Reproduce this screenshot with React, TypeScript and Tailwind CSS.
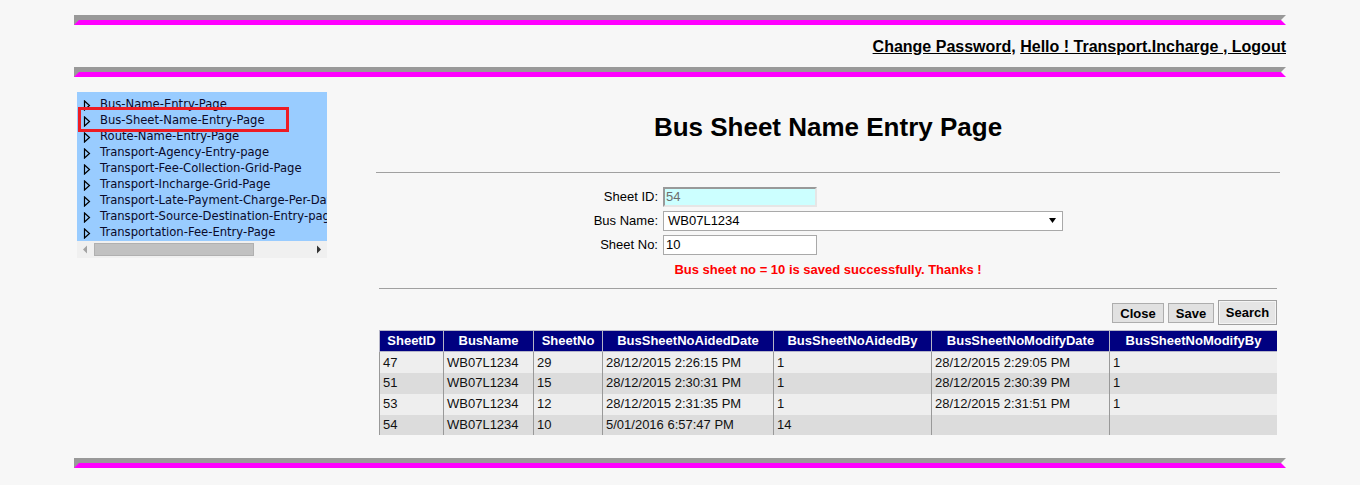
import React from "react";

const menuItems = [
  "Bus-Name-Entry-Page",
  "Bus-Sheet-Name-Entry-Page",
  "Route-Name-Entry-Page",
  "Transport-Agency-Entry-page",
  "Transport-Fee-Collection-Grid-Page",
  "Transport-Incharge-Grid-Page",
  "Transport-Late-Payment-Charge-Per-Day-Entry-Page",
  "Transport-Source-Destination-Entry-page",
  "Transportation-Fee-Entry-Page",
];

const rows = [
  ["47", "WB07L1234", "29", "28/12/2015 2:26:15 PM", "1", "28/12/2015 2:29:05 PM", "1"],
  ["51", "WB07L1234", "15", "28/12/2015 2:30:31 PM", "1", "28/12/2015 2:30:39 PM", "1"],
  ["53", "WB07L1234", "12", "28/12/2015 2:31:35 PM", "1", "28/12/2015 2:31:51 PM", "1"],
  ["54", "WB07L1234", "10", "5/01/2016 6:57:47 PM", "14", "", ""],
];

const columns = [
  { name: "SheetID", w: "w-[64px]" },
  { name: "BusName", w: "w-[90px]" },
  { name: "SheetNo", w: "w-[69px]" },
  { name: "BusSheetNoAidedDate", w: "w-[171px]" },
  { name: "BusSheetNoAidedBy", w: "w-[158px]" },
  { name: "BusSheetNoModifyDate", w: "w-[178px]" },
  { name: "BusSheetNoModifyBy", w: "w-[168px]" },
];

// gray / magenta divider bar
const Bar = () => (
  <div className="h-0 w-full border-t-[5px] border-b-[5px] border-l-[5px] border-r-[5px] border-t-[#999999] border-b-[#ff00ff] border-l-[#999999] border-r-[#f7f7f7]" />
);

const TreeArrow = () => (
  <svg width="8" height="11" viewBox="0 0 8 11" className="block">
    <path d="M1.5 1 L6.5 5.5 L1.5 10 Z" fill="none" stroke="#000" strokeWidth="1.2" />
  </svg>
);

const Sidebar = () => (
  <div className="relative ml-[3px] mt-[15px] w-[250px] self-start">
    {/* tree menu */}
    <div className="overflow-hidden bg-[#99ccff] pt-[5px] font-['DejaVu_Sans',sans-serif] text-[11.6px] text-[#0a0a2a]">
      {menuItems.map((item) => (
        <div key={item} className="flex h-[16px] items-center whitespace-nowrap">
          <span className="flex w-[23px] shrink-0 justify-end pr-[9px]">
            <TreeArrow />
          </span>
          <span>{item}</span>
        </div>
      ))}
    </div>
    {/* horizontal scrollbar */}
    <div className="flex h-[17px] items-center bg-[#f0f0f0]">
      <svg width="17" height="17" viewBox="0 0 17 17" className="block shrink-0">
        <path d="M6 8.5 L10 4.5 L10 12.5 Z" fill="#a3a3a3" />
      </svg>
      <div className="h-[13px] w-[160px] border border-[#b0b0b0] bg-[#c1c1c1]" />
      <svg width="17" height="17" viewBox="0 0 17 17" className="ml-auto block shrink-0">
        <path d="M11 8.5 L7 4.5 L7 12.5 Z" fill="#333" />
      </svg>
    </div>
    {/* highlight box */}
    <div className="absolute left-[1px] top-[15px] h-[25px] w-[211px] border-[3px] border-[#ed1c24]" />
  </div>
);

const Main = () => (
  <div className="ml-[49px] w-[904px] font-['Liberation_Sans',Arial,sans-serif] text-[13px] text-black">
    <h1 className="mt-[36px] text-center text-[26px] font-bold leading-[28px]">Bus Sheet Name Entry Page</h1>
    <div className="mt-[31px] border-t border-[#a0a0a0]" />

    {/* form */}
    <div className="mt-[14px] grid grid-cols-[282px_auto] gap-x-[5px] gap-y-[4px]">
      <label className="flex h-[20px] items-center justify-end">Sheet ID:</label>
      <div className="flex h-[20px] w-[154px] items-center border-2 border-t-[#999] border-l-[#999] border-r-[#e6e6e6] border-b-[#e6e6e6] bg-[#ccffff] pl-[1px] text-[#6d6d6d]">
        54
      </div>
      <label className="flex h-[20px] items-center justify-end">Bus Name:</label>
      <div className="flex h-[20px] w-[400px] items-center border border-[#a9a9a9] bg-white pl-[4px] pr-[6px]">
        <span>WB07L1234</span>
        <svg width="7" height="6" viewBox="0 0 7 6" className="ml-auto block">
          <path d="M0 0 L7 0 L3.5 5 Z" fill="#000" />
        </svg>
      </div>
      <label className="flex h-[20px] items-center justify-end">Sheet No:</label>
      <div className="flex h-[20px] w-[154px] items-center border border-[#a9a9a9] bg-white pl-[2px]">10</div>
    </div>

    <p className="mt-[7px] text-center font-bold leading-[15px] text-[#ff0000]">
      Bus sheet no = 10 is saved successfully. Thanks !
    </p>
    <div className="mx-[3px] mt-[11px] border-t border-[#a0a0a0]" />

    {/* buttons */}
    <div className="mx-[3px] mt-[11px] flex h-[25px] items-center justify-end gap-[4px]">
      <button className="h-[20px] w-[52px] border border-[#adadad] bg-[#e1e1e1] font-bold">Close</button>
      <button className="h-[20px] w-[46px] border border-[#adadad] bg-[#e1e1e1] font-bold">Save</button>
      <button className="h-[25px] w-[59px] border border-[#a0a0a0] bg-[#e5e5e5] font-bold shadow-[inset_0_0_0_1px_#f4f4f4]">
        Search
      </button>
    </div>

    {/* grid */}
    <div className="mx-[3px] mt-[5px] h-[105px] overflow-hidden">
      <table className="w-[898px] table-fixed border-collapse">
        <thead>
          <tr className="h-[21px] bg-[#000080] text-white">
            {columns.map((c) => (
              <th key={c.name} className={`${c.w} border border-[#b5b5c8] px-[2px] text-center font-bold`}>
                {c.name}
              </th>
            ))}
          </tr>
        </thead>
        <tbody>
          {rows.map((r, i) => (
            <tr key={i} className={`h-[21px] ${i % 2 === 0 ? "bg-[#eeeeee]" : "bg-[#dcdcdc]"}`}>
              {r.map((cell, j) => (
                <td key={j} className="border-x border-[#999] pl-[3px] text-left text-[#111]">
                  {cell}
                </td>
              ))}
            </tr>
          ))}
        </tbody>
      </table>
    </div>
  </div>
);

export default function App() {
  return (
    <div className="min-h-[485px] bg-[#f7f7f7]">
      <div className="ml-[74px] w-[1212px] pt-[15px]">
        <Bar />
        <div className="flex h-[42px] items-center justify-end pt-[2px] font-['Liberation_Sans',Arial,sans-serif] text-[16px] font-bold text-black">
          <a href="#" className="underline">Change Password,</a>
          <span>&nbsp;</span>
          <a href="#" className="underline">Hello ! Transport.Incharge , Logout</a>
        </div>
        <Bar />
        <div className="flex">
          <Sidebar />
          <Main />
        </div>
        <div className="mt-[23px]">
          <Bar />
        </div>
      </div>
    </div>
  );
}
